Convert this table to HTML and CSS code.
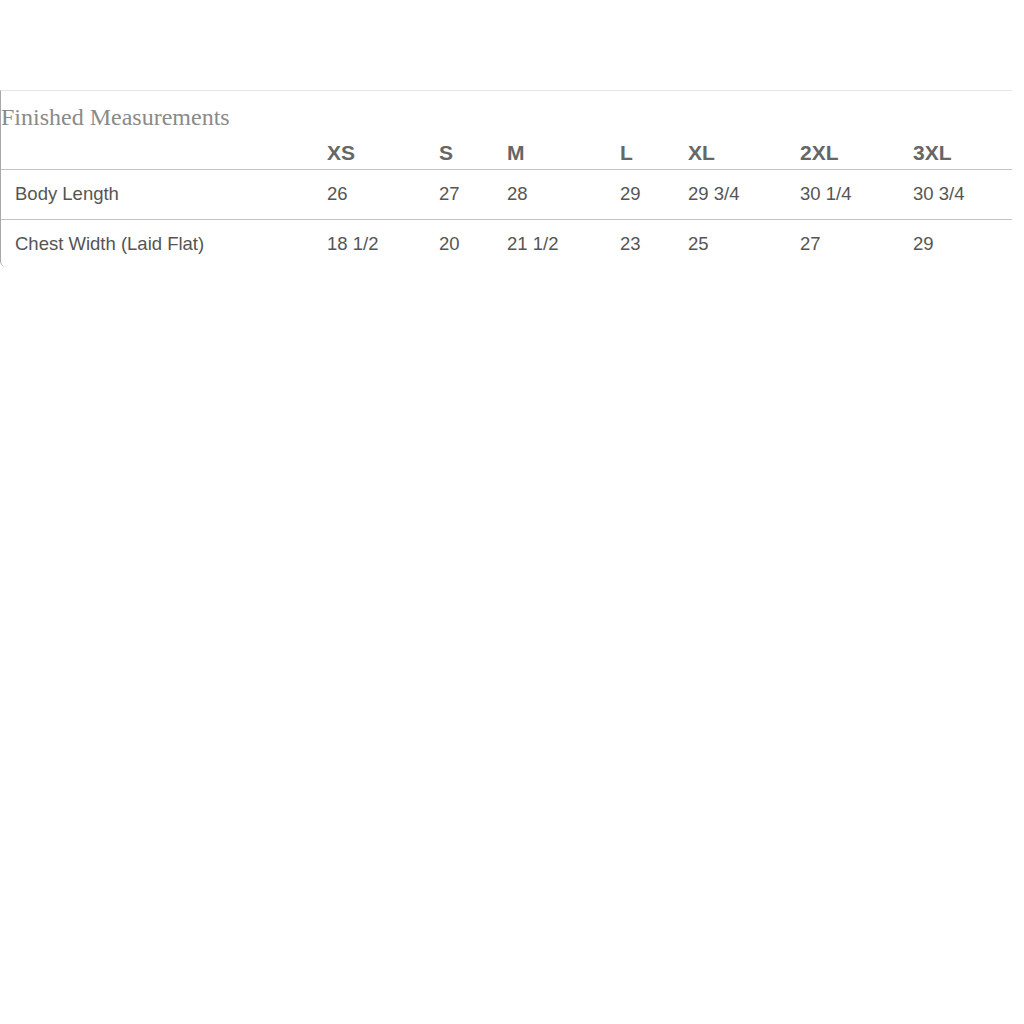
FILE: index.html
```html
<!DOCTYPE html>
<html>
<head>
<meta charset="utf-8">
<link rel="stylesheet" href="styles.css">
</head>
<body>
<div class="sizechart">
  <div class="caption">Finished Measurements</div>
  <table class="chart">
    <colgroup>
      <col class="c-label">
      <col class="c-wide">
      <col class="c-narrow">
      <col class="c-wide2">
      <col class="c-narrow">
      <col class="c-wide">
      <col class="c-wide2">
      <col class="c-last">
    </colgroup>
    <thead>
      <tr>
        <th class="label"></th>
        <th>XS</th><th>S</th><th>M</th><th>L</th><th>XL</th><th>2XL</th><th>3XL</th>
      </tr>
    </thead>
    <tbody>
      <tr>
        <td class="label">Body Length</td>
        <td>26</td><td>27</td><td>28</td><td>29</td><td>29 3/4</td><td>30 1/4</td><td>30 3/4</td>
      </tr>
      <tr class="last">
        <td class="label">Chest Width (Laid Flat)</td>
        <td>18 1/2</td><td>20</td><td>21 1/2</td><td>23</td><td>25</td><td>27</td><td>29</td>
      </tr>
    </tbody>
  </table>
</div>
</body>
</html>
```

FILE: styles.css
```css
html, body {
  margin: 0;
  padding: 0;
  background: #ffffff;
}

.sizechart {
  margin-top: 90px;
  width: 1011px;
  border-top: 1px solid #e6e6e6;
  border-left: 1px solid #a8a8a8;
  border-bottom-left-radius: 6px;
}

.caption {
  font-family: "Liberation Serif", "Times New Roman", serif;
  font-size: 24px;
  line-height: 28px;
  color: #8a8a8a;
  padding-top: 12px;
}

.chart {
  width: 1011px;
  table-layout: fixed;
  border-collapse: collapse;
  font-family: "Liberation Sans", Arial, sans-serif;
}

.c-label { width: 326px; }
.c-wide { width: 112px; }
.c-narrow { width: 68px; }
.c-wide2 { width: 113px; }
.c-last { width: 99px; }

.chart th {
  text-align: left;
  font-weight: bold;
  font-size: 21px;
  line-height: 24px;
  color: #666666;
  padding: 10px 0 4px 0;
  vertical-align: bottom;
}

.chart td {
  font-size: 18.5px;
  line-height: 21px;
  color: #555555;
  padding: 13px 0 15px 0;
  border-top: 1px solid #c4c4c4;
  white-space: nowrap;
}

.chart .last td {
  padding-bottom: 13px;
}

.chart .label {
  padding-left: 14px;
}
```
